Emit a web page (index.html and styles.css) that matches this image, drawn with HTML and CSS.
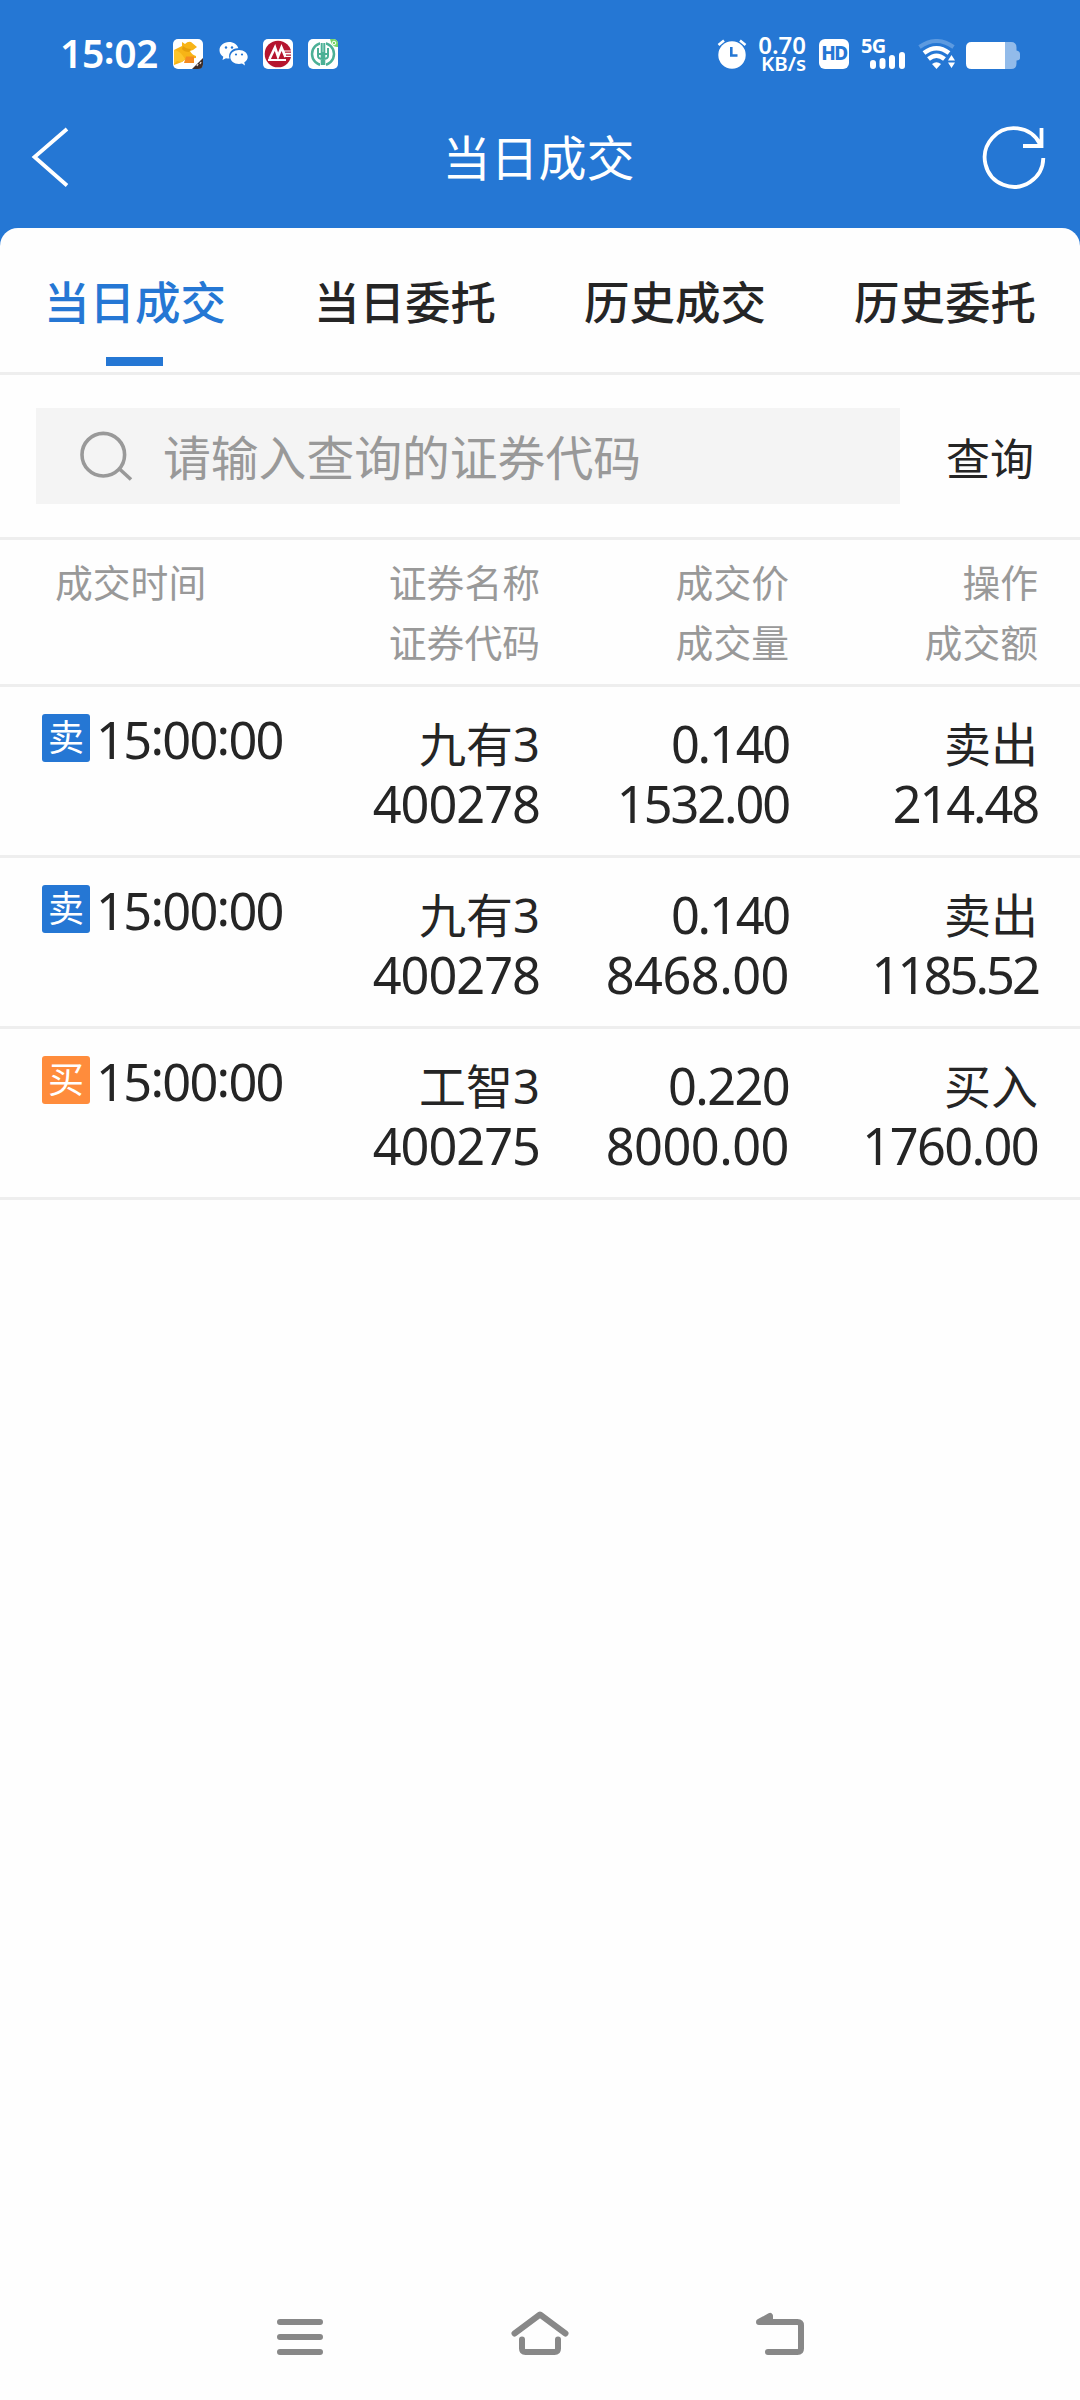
FILE: index.html
```html
<!DOCTYPE html>
<html lang="zh-CN">
<head>
<meta charset="utf-8">
<title>当日成交</title>
<link rel="stylesheet" href="styles.css">
</head>
<body>
<div class="app">
  <header class="top">
    <div class="status">
      <span class="clock">15<span class="colon">:</span>02</span>
      <svg class="status-left" viewBox="0 0 165 30" width="165" height="30">
        <rect width="30" height="30" rx="5" fill="#fff"/>
        <path d="M1 11L9 7V3L12 5Q15 2 18 3L24 8L20 11L17 12Q19 16 23 17V19L13 20L9 23L1 26Z" fill="#f7b416"/>
        <path d="M1 11Q7 12 10 17L12 20L9 23L4 22L1 25Z" fill="#fdc52b"/>
        <path d="M10 7Q13 10 18 10L16 13Q11 13 9 10Z" fill="#e59f0c"/>
        <path d="M13 17.500H21V24H11Z" fill="#f58a1f"/>
        <path d="M30 19V25Q30 30 25 30H19Z" fill="#3b2c2a"/>
        <path d="M24 27l1-2M27 25l1-2" stroke="#d8c8c0" stroke-width="1.500"/>
        <g fill="#fff">
          <path d="M56 3C50.500 3 46.500 6.700 46.500 11.200C46.500 14 48 16.200 50.300 17.700L49.500 21L53 19.300Q54.500 19.700 56.500 19.600C54.500 13.500 60 8.800 65.300 9.300C64.500 5.700 60.600 3 56 3Z"/>
          <path d="M66 11C61 11 57.300 14 57.300 18C57.300 22 61 25 66 25L69 24.500L72 26.500L71.300 23.300C73.500 22 74.700 20.300 74.700 18C74.700 14 71 11 66 11Z"/>
        </g>
        <g fill="#2577d4"><circle cx="53" cy="8.500" r="1.200"/><circle cx="59" cy="8.500" r="1.200"/><circle cx="63" cy="15.500" r="1.100"/><circle cx="69" cy="15.500" r="1.100"/></g>
        <rect x="90" width="30" height="30" rx="5" fill="#fff"/>
        <circle cx="105" cy="15" r="13.300" fill="#b5152f"/>
        <path d="M96.500 20L102 8.500L105 17.500L108.500 8.500L112.500 18" fill="none" stroke="#fff" stroke-width="2.600"/>
        <path d="M95 21H113" fill="none" stroke="#fff" stroke-width="2"/>
        <path d="M111 11.500H120V18H113Z" fill="#fff"/>
        <path d="M112 13.200H118M113 16.200H118" stroke="#b5152f" stroke-width="1.300"/>
        <rect x="135" width="30" height="30" rx="5" fill="#fff"/>
        <circle cx="150" cy="15" r="11" fill="none" stroke="#4cb096" stroke-width="2.500"/>
        <rect x="147" y="2" width="6" height="26" fill="#fff"/>
        <path d="M148.700 4V26M151.300 4V26M145 9V17Q145 20 150 20Q155 20 155 17V9M145 15H155M150 13V26" fill="none" stroke="#4cb096" stroke-width="2"/>
        <path d="M157 0H160Q165 0 165 5V8Q159 9 157 0Z" fill="#76d568"/>
        <circle cx="161" cy="4" r="1.800" fill="none" stroke="#fff"/>
      </svg>
      <svg class="alarm" viewBox="0 0 30 30" width="30" height="30">
        <circle cx="15" cy="16" r="13.700" fill="#fff"/>
        <path d="M1.500 6L7 1.500M28.500 6L23 1.500" stroke="#fff" stroke-width="2.600"/>
        <path d="M14.300 8V16.500H20.500" fill="none" stroke="#2577d4" stroke-width="2.600"/>
      </svg>
      <div class="speed"><span class="rate">0.70</span><span class="unit">KB/s</span></div>
      <span class="hd">HD</span>
      <div class="signal"><span class="net">5G</span>
        <svg viewBox="0 0 35 17" width="35" height="17" stroke="#fff" stroke-width="6" stroke-linecap="round"><path d="M3 11V14M12.500 9V14M22 6V14M32 3V14"/></svg>
      </div>
      <svg class="wifi" viewBox="0 0 37 30" width="37" height="30">
        <path d="M1.500 8Q18.500-4 35.500 8" fill="none" stroke="#5c9ae0" stroke-width="4"/>
        <path d="M6 14Q18.500 4.500 31 14" fill="none" stroke="#fff" stroke-width="4.500"/>
        <path d="M10.500 20Q18.500 13.500 26.500 20" fill="none" stroke="#fff" stroke-width="4.500"/>
        <path d="M14 25Q18.500 21.500 23 25L18.500 30Z" fill="#fff"/>
        <path d="M30 21.500L33.500 16L37 21.500ZM30 23.500H37L33.500 29Z" fill="#fff"/>
      </svg>
      <svg class="battery" viewBox="0 0 54 27" width="54" height="27">
        <path d="M39 0H45Q50.500 0 50.500 5.500V8.500Q54 9 54 12V16Q54 18 50.500 18.500V21.500Q50.500 27 45 27H39Z" fill="#92bbea"/>
        <path d="M5.500 0H39V27H5.500Q0 27 0 21.500V5.500Q0 0 5.500 0Z" fill="#fff"/>
      </svg>
    </div>
    <div class="titlebar">
      <svg viewBox="0 0 40 64" width="40" height="64" fill="none" stroke="#fff" stroke-width="3.800"><path d="M38 3L5.500 31L38 59.500"/></svg>
      <h1>当日成交</h1>
      <svg viewBox="0 0 64 64" width="64" height="64" fill="none" stroke="#fff" stroke-width="3.800"><path d="M61.300 32A29.300 29.300 0 1 1 58 18M59.500 2V20H41"/></svg>
    </div>
  </header>
  <main class="sheet">
    <nav class="tabs">
      <a class="tab active">当日成交</a><a class="tab">当日委托</a><a class="tab">历史成交</a><a class="tab">历史委托</a>
    </nav>
    <div class="search">
      <div class="field">
        <svg viewBox="0 0 56 56" width="56" height="56" fill="none" stroke="#999" stroke-width="3.600"><ellipse cx="26.300" cy="26.700" rx="21.300" ry="21.300"/><path d="M42 40.500L54 51.500"/></svg>
        <span class="placeholder">请输入查询的证券代码</span>
      </div>
      <span class="query">查询</span>
    </div>
    <div class="row head">
      <div class="time">成交时间</div>
      <div class="cell"><span>证券名称</span><span>证券代码</span></div>
      <div class="cell"><span>成交价</span><span>成交量</span></div>
      <div class="cell"><span>操作</span><span>成交额</span></div>
    </div>
    <div class="row">
      <div class="time"><b class="tag sell">卖</b><span class="num clocktime">15<span class="colon">:</span>00<span class="colon">:</span>00</span></div>
      <div class="cell"><span>九有3</span><span class="num code">400278</span></div>
      <div class="cell"><span class="num price">0.140</span><span class="num tight">1532.00</span></div>
      <div class="cell"><span>卖出</span><span class="num tight">214.48</span></div>
    </div>
    <div class="row">
      <div class="time"><b class="tag sell">卖</b><span class="num clocktime">15<span class="colon">:</span>00<span class="colon">:</span>00</span></div>
      <div class="cell"><span>九有3</span><span class="num code">400278</span></div>
      <div class="cell"><span class="num price">0.140</span><span class="num">8468.00</span></div>
      <div class="cell"><span>卖出</span><span class="num tighter">1185.52</span></div>
    </div>
    <div class="row">
      <div class="time"><b class="tag buy">买</b><span class="num clocktime">15<span class="colon">:</span>00<span class="colon">:</span>00</span></div>
      <div class="cell"><span>工智3</span><span class="num code">400275</span></div>
      <div class="cell"><span class="num snug">0.220</span><span class="num">8000.00</span></div>
      <div class="cell"><span>买入</span><span class="num snug">1760.00</span></div>
    </div>
  </main>
  <footer class="sysnav">
    <svg viewBox="0 0 60 50" width="60" height="50"><path d="M10 12H50M10 27H50M10 42H50"/></svg>
    <svg viewBox="0 0 60 50" width="60" height="50"><path d="M4.500 23.500L30 4.500L55.500 23.500M12 29.500V38.500Q12 42 15.500 42H44.500Q48 42 48 38.500V29.500"/></svg>
    <svg viewBox="0 0 60 50" width="60" height="50"><path d="M18 42H47.500Q51 42 51 38.500V15.500Q51 12 47.500 12H9L20 6V10"/></svg>
  </footer>
</div>
</body>
</html>
```
FILE: styles.css
```css
* { box-sizing: border-box; }
body {
  margin: 0;
  background: #fefefe;
  color: #252525;
  font-family: "Noto Sans", "Noto Sans CJK SC", sans-serif;
}
svg { display: block; flex: none; }
.app { width: 1080px; height: 2400px; display: flex; flex-direction: column; background: #2577d4; }
.top { height: 228px; color: #fff; }
.status { height: 108px; display: flex; align-items: center; padding: 0 60px 0 60px; }
.clock { width: 113px; font-size: 39px; font-weight: 600; line-height: 52px; padding-bottom: 2px; letter-spacing: -0.4px; }
.colon { display: inline-block; transform: translateY(-4px); }
.alarm { margin-left: auto; }
.speed { width: 48px; margin-left: 11px; display: flex; flex-direction: column; align-items: flex-end; font-weight: 600; }
.rate { font-size: 24px; line-height: 19px; letter-spacing: 0; }
.unit { font-size: 20.500px; line-height: 19px; letter-spacing: 0; }
.hd {
  width: 30px; height: 30px; margin-left: 13px; border-radius: 6px;
  background: #fff; color: #2577d4;
  font-size: 19px; font-weight: 800; line-height: 29px; text-align: center; letter-spacing: -1.500px;
}
.signal { width: 44px; height: 30px; margin-left: 12px; display: flex; flex-direction: column; align-items: flex-end; }
.net { align-self: flex-start; font-size: 20px; font-weight: 700; line-height: 14px; height: 13px; letter-spacing: -0.8px; }
.wifi { margin-left: 13px; }
.battery { margin: 2px 0 0 11px; }
.titlebar { height: 100px; display: flex; align-items: center; justify-content: space-between; padding: 0 34px 0 29px; }
h1 { margin: 0 0 0 26px; font-size: 48px; font-weight: 400; line-height: 70px; }
.sheet { flex: 1; background: #fefefe; border-radius: 18px 18px 0 0; }
.tabs { height: 147px; display: grid; grid-template-columns: repeat(4, 1fr); border-bottom: 3px solid #eee; }
.tab { display: flex; flex-direction: column; align-items: center; font-size: 45.500px; font-weight: 500; line-height: 66px; padding-top: 41px; }
.tab.active { color: #2577d4; }
.tab.active::after { content: ""; width: 57px; height: 9px; margin: 22px 1px 0 0; background: #2577d4; }
.search { height: 165px; display: flex; align-items: center; padding: 0 46px 0 36px; border-bottom: 3px solid #eee; }
.field { width: 864px; height: 96px; display: flex; align-items: center; padding-left: 41px; background: #f4f4f4; }
.placeholder { margin-left: 30px; padding-top: 3px; font-size: 47.800px; line-height: 70px; color: #999; }
.query { margin-left: auto; font-size: 44px; line-height: 64px; padding-top: 5px; }
.row {
  height: 171px; display: grid; grid-template-columns: 350px 190px 249px 249px;
  padding-top: 27px; border-bottom: 3px solid #eee;
}
.time { display: flex; align-items: flex-start; padding-left: 42px; }
.tag { width: 48px; height: 48px; border-radius: 3px; color: #fff; font-size: 36px; font-weight: 400; line-height: 48px; text-align: center; }
.sell { background: #2577d4; }
.buy { background: #ff8c3c; }
.cell { display: flex; flex-direction: column; align-items: flex-end; font-size: 47px; line-height: 60px; white-space: nowrap; }
.num { font-size: 50.500px; letter-spacing: -0.500px; }
.code { letter-spacing: -1px; }
.snug { letter-spacing: -1.600px; }
.tight { letter-spacing: -2.100px; }
.price { letter-spacing: -2.200px; }
.tighter { letter-spacing: -2.900px; }
.clocktime { margin-left: 6px; line-height: 51px; letter-spacing: -1.700px; }
.head { height: 147px; padding-top: 13px; color: #999; }
.head .time { padding-left: 55px; font-size: 37.800px; line-height: 60px; }
.head .cell { font-size: 37.800px; }
.sysnav { height: 90px; display: flex; justify-content: center; gap: 180px; background: #fefefe; }
.sysnav svg { fill: none; stroke: #888; stroke-width: 6; stroke-linecap: round; stroke-linejoin: round; }
```
